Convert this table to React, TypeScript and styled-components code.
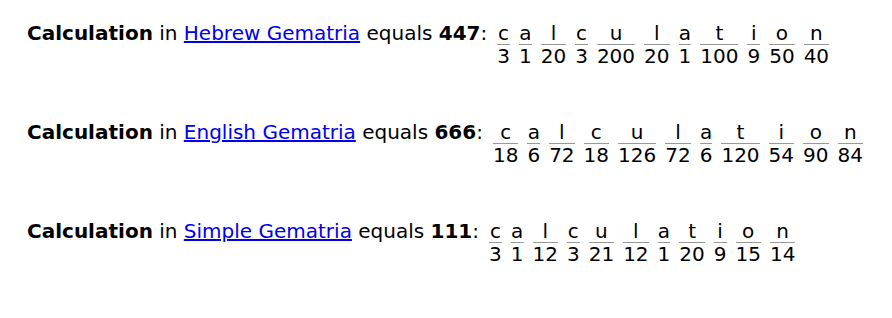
import React from "react";
import styled, { createGlobalStyle } from "styled-components";

const Global = createGlobalStyle`
  html, body { margin: 0; padding: 0; background: #fff; }
  body { font-family: "DejaVu Sans", Verdana, sans-serif; color: #000; }
`;

const Page = styled.div`
  padding: 22px 0 0 27px;
  display: flex;
  flex-direction: column;
  gap: 53px;
`;

const Entry = styled.div`
  font-size: 20px;
  line-height: 23px;
  white-space: nowrap;
`;

const Word = styled.b`
  font-weight: bold;
`;

const Link = styled.a`
  color: #0000ee;
  text-decoration: underline;
`;

const Breakdown = styled.span`
  display: inline-flex;
  gap: 7px;
  margin-left: 9px;
  vertical-align: baseline;
`;

const Cell = styled.span`
  display: inline-flex;
  flex-direction: column;
  align-items: stretch;
  text-align: center;
  padding: 0 1px;
`;

const Letter = styled.span`
  line-height: 22px;
  border-bottom: 1px solid #999;
`;

const Num = styled.span`
  line-height: 23px;
`;

type Row = { system: string; total: number; values: number[] };

const rows: Row[] = [
  { system: "Hebrew Gematria", total: 447, values: [3, 1, 20, 3, 200, 20, 1, 100, 9, 50, 40] },
  { system: "English Gematria", total: 666, values: [18, 6, 72, 18, 126, 72, 6, 120, 54, 90, 84] },
  { system: "Simple Gematria", total: 111, values: [3, 1, 12, 3, 21, 12, 1, 20, 9, 15, 14] },
];

const letters = "calculation".split("");

export default function App() {
  return (
    <>
      <Global />
      <Page>
        {rows.map((r) => (
          <Entry key={r.system}>
            <Word>Calculation</Word> in <Link href="#">{r.system}</Link> equals{" "}
            <Word>{r.total}</Word>:
            <Breakdown>
              {letters.map((l, i) => (
                <Cell key={i}>
                  <Letter>{l}</Letter>
                  <Num>{r.values[i]}</Num>
                </Cell>
              ))}
            </Breakdown>
          </Entry>
        ))}
      </Page>
    </>
  );
}
